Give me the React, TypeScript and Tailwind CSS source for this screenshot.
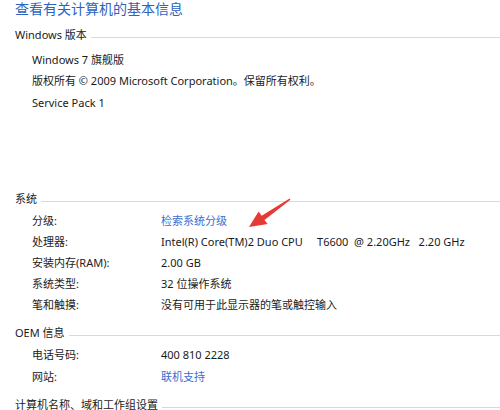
const font = { fontFamily: '"Noto Sans", "Noto Sans CJK SC", sans-serif' };

function Header({ children, className = "" }: { children: React.ReactNode; className?: string }) {
  return (
    <div className={`flex items-center gap-1 pl-[15px] h-[20px] text-[11px] text-[#1a1a1a] ${className}`}>
      <span className="whitespace-nowrap">{children}</span>
      <div className="flex-1 h-px bg-[#d9d9d9] mt-[5px]" />
    </div>
  );
}

function Row({ label, value, link = false, h = "h-[21px]" }: { label: string; value: string; link?: boolean; h?: string }) {
  return (
    <div className={`flex items-center ${h} text-[11px]`}>
      <div className="w-[161px] pl-[32px] text-[#222]">{label}</div>
      <div className={`whitespace-pre ${link ? "text-[#3a6fd0]" : "text-[#1a1a1a]"}`}>{value}</div>
    </div>
  );
}

export default function App() {
  return (
    <div className="relative w-[500px] h-[410px] overflow-hidden bg-white" style={font}>
      <div className="pl-[15px] mt-[-1px] h-[20px] leading-[20px] text-[14px] text-[#2c63bf]">
        查看有关计算机的基本信息
      </div>

      <Header className="mt-[6px]">Windows 版本</Header>
      <div className="pt-[3.5px] pl-[32px] text-[11px] text-[#1a1a1a] leading-[21.5px]">
        <div>Windows 7 旗舰版</div>
        <div>版权所有 © 2009 Microsoft Corporation。保留所有权利。</div>
        <div>Service Pack 1</div>
      </div>

      <Header className="mt-[76px]">系统</Header>
      <div className="pt-[1.5px]">
        <Row label="分级:" value="检索系统分级" link />
        <Row label="处理器:" value="Intel(R) Core(TM)2 Duo CPU     T6600  @ 2.20GHz   2.20 GHz" />
        <Row label="安装内存(RAM):" value="2.00 GB" />
        <Row label="系统类型:" value="32 位操作系统" />
        <Row label="笔和触摸:" value="没有可用于此显示器的笔或触控输入" />
      </div>

      <Header className="mt-[7.5px]">OEM 信息</Header>
      <div className="pt-[1px]">
        <Row label="电话号码:" value="400 810 2228" h="h-[22px]" />
        <Row label="网站:" value="联机支持" link h="h-[22px]" />
      </div>

      <Header className="mt-[7px]">计算机名称、域和工作组设置</Header>

      {/* red pointer arrow */}
      <svg className="absolute left-0 top-0" width="500" height="410" viewBox="0 0 500 410">
        <polygon
          points="289.6,198.4 261.7,215.8 258.6,211.6 249,227 267.6,224 264.5,219.9 290.4,199.8"
          fill="#e63a35"
        />
      </svg>
    </div>
  );
}
